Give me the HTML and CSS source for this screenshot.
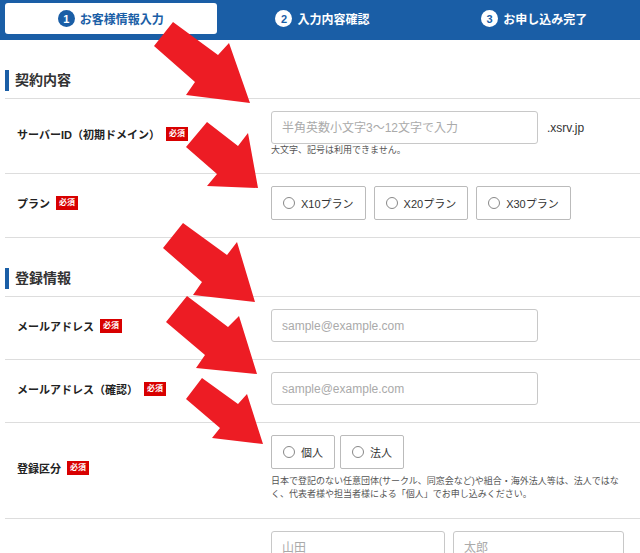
FILE: index.html
```html
<!DOCTYPE html>
<html lang="ja">
<head>
<meta charset="utf-8">
<title>お客様情報入力</title>
<link rel="stylesheet" href="styles.css">
</head>
<body>
<header class="steps">
  <div class="step is-current"><span class="step-num">1</span>お客様情報入力</div>
  <div class="step"><span class="step-num">2</span>入力内容確認</div>
  <div class="step"><span class="step-num">3</span>お申し込み完了</div>
</header>

<main class="form">
  <section>
    <div class="section-head"><h2 class="section-title">契約内容</h2></div>
    <div class="row">
      <div class="row-label">サーバーID（初期ドメイン）<span class="req">必須</span></div>
      <div class="row-field">
        <div class="field-inline">
          <input class="text-input" type="text" placeholder="半角英数小文字3〜12文字で入力">
          <span class="suffix">.xsrv.jp</span>
        </div>
        <p class="note">大文字、記号は利用できません。</p>
      </div>
    </div>
    <div class="row">
      <div class="row-label">プラン<span class="req">必須</span></div>
      <div class="row-field">
        <div class="choices">
          <label class="choice"><input type="radio" name="plan">X10プラン</label>
          <label class="choice"><input type="radio" name="plan">X20プラン</label>
          <label class="choice"><input type="radio" name="plan">X30プラン</label>
        </div>
      </div>
    </div>
  </section>

  <section>
    <div class="section-head"><h2 class="section-title">登録情報</h2></div>
    <div class="row">
      <div class="row-label">メールアドレス<span class="req">必須</span></div>
      <div class="row-field">
        <input class="text-input" type="email" placeholder="sample@example.com">
      </div>
    </div>
    <div class="row">
      <div class="row-label">メールアドレス（確認）<span class="req">必須</span></div>
      <div class="row-field">
        <input class="text-input" type="email" placeholder="sample@example.com">
      </div>
    </div>
    <div class="row">
      <div class="row-label">登録区分<span class="req">必須</span></div>
      <div class="row-field">
        <div class="choices choices-tight">
          <label class="choice"><input type="radio" name="kind">個人</label>
          <label class="choice"><input type="radio" name="kind">法人</label>
        </div>
        <p class="note note-block">日本で登記のない任意団体(サークル、同窓会など)や組合・海外法人等は、法人ではなく、代表者様や担当者様による「個人」でお申し込みください。</p>
      </div>
    </div>
    <div class="row">
      <div class="row-label">お名前<span class="req">必須</span></div>
      <div class="row-field">
        <div class="name-grid">
          <input class="text-input" type="text" placeholder="山田">
          <input class="text-input" type="text" placeholder="太郎">
          <input class="text-input" type="text" placeholder="ヤマダ">
          <input class="text-input" type="text" placeholder="タロウ">
        </div>
        <p class="note note-block">フリガナは全角カタカナで入力してください。</p>
      </div>
    </div>
  </section>
</main>

<svg class="arrows" width="640" height="553" viewBox="0 0 640 553" aria-hidden="true">
  <polygon points="173,22 218,55 229,43 250,103 186,95 195,82 154,46"/>
  <polygon points="207,122 238,146 248,133 258,188 207,186 217,174 186,147"/>
  <polygon points="183,223 227,255 237,242 255,302 193,295 202,282 163,248"/>
  <polygon points="187,296 228,327 239,316 257,374 196,368 205,355 166,322"/>
  <polygon points="202,378 238,404 247,394 263,444 212,438 220,428 186,399"/>
</svg>
</body>
</html>
```

FILE: styles.css
```css
body {
  margin: 0;
  position: relative;
  background: #fff;
  color: #222;
  font-family: "Liberation Sans", "Noto Sans CJK JP", sans-serif;
}

.steps {
  display: grid;
  grid-template-columns: repeat(3, 1fr);
  padding: 3px 0 6px 5px;
  background: #1a5ea6;
}

.step {
  height: 31px;
  display: flex;
  align-items: center;
  justify-content: center;
  gap: 5px;
  color: #fff;
  font-size: 12px;
  font-weight: bold;
}

.step.is-current {
  background: #fff;
  color: #1a5ea6;
  border-radius: 3px;
}

.step-num {
  width: 17px;
  height: 17px;
  border-radius: 50%;
  background: #fff;
  color: #1a5ea6;
  display: flex;
  align-items: center;
  justify-content: center;
  font-size: 11px;
  font-weight: bold;
}

.is-current .step-num {
  background: #1a5ea6;
  color: #fff;
}

.form {
  padding-left: 5px;
}

.section-head {
  margin-top: 30px;
  padding-bottom: 7px;
  border-bottom: 1px solid #ddd;
}

.section-title {
  margin: 0;
  border-left: 4px solid #1a5ea6;
  padding-left: 6px;
  font-size: 14px;
  line-height: 21px;
  font-weight: bold;
  color: #333;
}

.row {
  display: grid;
  grid-template-columns: 254px 1fr;
  align-items: center;
  padding: 12px 12px 17px 12px;
  border-bottom: 1px solid #ddd;
}

.row-label {
  display: flex;
  align-items: center;
  gap: 6px;
  font-size: 11px;
  font-weight: bold;
  color: #222;
}

.req {
  background: #d80000;
  color: #fff;
  font-size: 8px;
  font-weight: bold;
  padding: 0 3px;
  line-height: 14px;
}

.text-input {
  box-sizing: border-box;
  width: 267px;
  height: 33px;
  margin: 0;
  padding: 0 10px;
  border: 1px solid #c8c8c8;
  border-radius: 3px;
  font: 12px "Liberation Sans", "Noto Sans CJK JP", sans-serif;
  color: #333;
}

.text-input::placeholder {
  color: #aaa;
}

.field-inline {
  display: flex;
  align-items: center;
  gap: 9px;
}

.suffix {
  font-size: 12px;
  color: #333;
}

.note {
  margin: 0;
  font-size: 9px;
  line-height: 12px;
  color: #555;
}

.note-block {
  margin-top: 6px;
  line-height: 13px;
}

.choices {
  display: flex;
  gap: 8px;
}

.choices-tight {
  gap: 5px;
}

.choice {
  box-sizing: border-box;
  height: 34px;
  display: flex;
  align-items: center;
  gap: 6px;
  padding: 0 11px;
  border: 1px solid #bbb;
  border-radius: 2px;
  font-size: 11px;
  color: #333;
}

.choice input {
  appearance: none;
  width: 12px;
  height: 12px;
  margin: 0;
  border: 1px solid #888;
  border-radius: 50%;
  background: #fff;
}

.name-grid {
  display: grid;
  grid-template-columns: 174px 171px;
  gap: 8px;
}

.name-grid .text-input {
  width: 100%;
}

.arrows {
  position: absolute;
  top: 0;
  left: 0;
  pointer-events: none;
  fill: #ed1c24;
}
```
